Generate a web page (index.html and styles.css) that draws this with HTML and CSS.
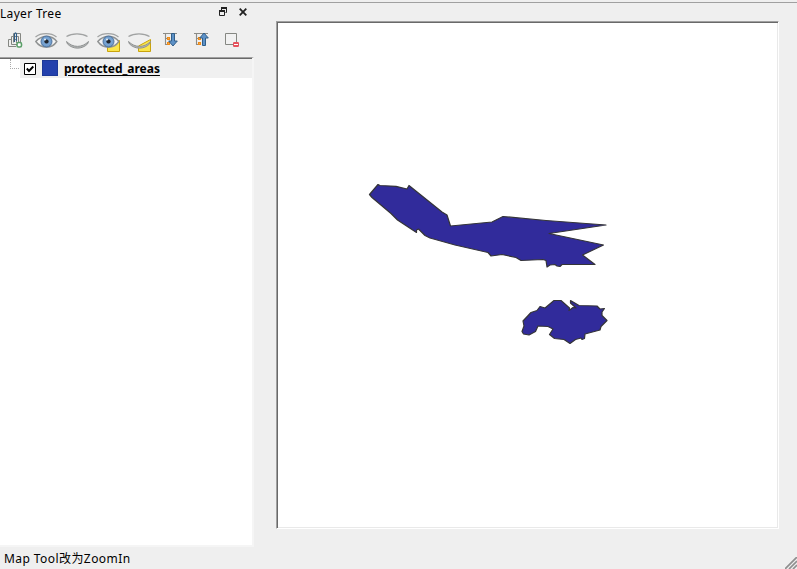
FILE: index.html
```html
<!DOCTYPE html>
<html lang="zh">
<head>
<meta charset="utf-8">
<title>Layer Tree</title>
<link rel="stylesheet" href="styles.css">
</head>
<body>
<svg width="0" height="0" class="defs">
  <defs>
    <radialGradient id="iris"><stop offset="0" stop-color="#5277a5"/><stop offset=".55" stop-color="#7aa5d3"/><stop offset="1" stop-color="#6b98c9"/></radialGradient>
    <g id="eye">
      <path d="M.8 9.500C6 3 17 2.500 21.800 9.500C17 17 6 17 .8 9.500Z" fill="#f4f4f4" stroke="#8f9292" stroke-width="1.400"/>
      <path d="M.5 5C6 .6 16 .6 21.500 5" fill="none" stroke="#a0a2a2" stroke-width="1.300"/>
      <circle cx="11.500" cy="9.500" r="5.500" fill="url(#iris)" stroke="#486b94" stroke-width=".9"/>
      <circle cx="11.500" cy="9.500" r="2.100" fill="#20262e"/>
      <circle cx="10" cy="7.500" r="1" fill="#e8f0f8"/>
    </g>
    <g id="closed">
      <path d="M.5 4.500C6 1 16 1 21.500 4.500" fill="none" stroke="#a0a2a2" stroke-width="1.400"/>
      <path d="M.5 9.500C7 16 16 16 22.500 9.500L21.500 12C16 17.500 7 17.500 1.500 12Z" fill="#b5b7b7" stroke="#8f9292" stroke-width="1"/>
    </g>
    <g id="tree" fill="none" stroke="#8c8c88">
      <path d="M0 1.500H14M2.500 1.500V13M2.500 6.500H4M2.500 12.500H4" stroke-width="1.100"/>
      <path d="M4.600 5.600H6.400V7.400H4.600ZM4.600 10.600H6.400V12.400H4.600Z" fill="#fff" stroke="#f08b16" stroke-width="1.300"/>
    </g>
  </defs>
</svg>
<main class="workspace">
  <section class="dock">
    <header class="title"><h1>Layer Tree</h1>
      <svg class="float" width="9" height="9"><path d="M2.500 3V.5H7.500V5.500H6.500" fill="none" stroke="#222"/><path d="M2 1H8" stroke="#222" stroke-width="2"/><path d="M.5 3.500H5.500V8.500H.5Z" fill="#efefef" stroke="#222"/><path d="M0 4H6" stroke="#222" stroke-width="2"/></svg>
      <svg class="close" width="8" height="8"><path d="M.7.700L7.300 7.300M7.300.700L.7 7.300" stroke="#222" stroke-width="1.800"/></svg>
    </header>
    <nav class="tools">
      <svg class="group" width="16" height="17"><g fill="none" stroke="#858782"><path d="M5.500 10.500V1.500H12.500V10"/><path d="M5 4.500H3.500V12.500H9M10.500 12V4.500H7"/><path d="M3 7.500H.5V14.500H8M8.500 11V7.500H5"/></g><path d="M6.500 10V2Q7.500-.5 8.500 2V9" fill="none" stroke="#315e88" stroke-width="1.100"/><rect x="9" y="10.500" width="4.500" height="4.500" rx="1.500" fill="#fff" stroke="#5a9f68" stroke-width="1.600"/></svg>
      <svg class="eye" width="25" height="20"><use href="#eye"/></svg>
      <svg class="eye" width="25" height="20"><use href="#closed"/></svg>
      <svg class="eye" width="25" height="20"><path d="M10.500 8.500H22.500V19.500H10.500Z" fill="#fbe64c" stroke="#c9a30c"/><use href="#eye"/></svg>
      <svg class="eye" width="25" height="20"><path d="M10.500 19.500V14L22.500 7.500V19.500Z" fill="#fbe64c" stroke="#c9a30c"/><use href="#closed"/></svg>
      <svg class="expand" width="16" height="16"><use href="#tree"/><path d="M8.500 1.500H11.500V9H14.300L10 14L5.700 9H8.500Z" fill="#5d91c7" stroke="#315e88"/></svg>
      <svg class="collapse" width="16" height="16"><use href="#tree"/><path d="M8.500 13.500H11.500V6H14.300L10 1L5.700 6H8.500Z" fill="#5d91c7" stroke="#315e88"/></svg>
      <svg class="remove" width="16" height="16"><path d="M.5 1.500H11.500V12.500H.5Z" fill="#f1f1f1" stroke="#858782"/><rect x="8" y="10" width="6" height="5" rx="1.200" fill="#e6515c"/><path d="M9 12.500H13" stroke="#fff"/></svg>
    </nav>
    <div class="layers">
      <div class="row"><span class="branch"></span>
        <div class="item"><svg class="check" width="12" height="12"><path d="M.5.500H11.500V11.500H.5Z" fill="#fff" stroke="#000"/><path d="M2.800 5.500L5 8L9.300 3.500" fill="none" stroke="#000" stroke-width="1.900"/></svg><span class="swatch"></span><span class="name">protected_areas</span></div>
      </div>
    </div>
  </section>
  <section class="map">
    <svg width="500" height="504" viewBox="278 23 500 504">
      <g fill="#312b9b" stroke="#343438" stroke-width="1.200" stroke-linejoin="round">
        <path d="M369.500 194.500L378 184.500L380 185.500L396 186.300L407 189L409 185.500L442 212L447 215L450.500 226L492 222L503 216.500L546 220.500L606 225L549 233.500L603.500 245L582.500 255L595 264.500L562 264.500L560 266.500L557 266L555 264.500L550 265L547 267L546 260.500L543 259.500L521 260.500L516 257.500L502 254.500L491 256L488 252.500L455 245L430 238L425 235.500L418.500 229L416.500 230L416.500 232.500L397.500 220L391 213.500L372 197.500Z"/>
        <path d="M554 300.500L561 300.500L569.500 308L569 310.500L573 307.500L576 308L570.500 303L570.500 300.500L579 305.500L597 306L600 309L604.500 308.500L602 312L602 315.500L607 320.500L601 326.500L600 330L585 334L584.500 338.500L582 339.500L581 338L575.500 339.500L570 343.500L564 339.500L554.500 338.500L549.500 334.500L553 329L548 326.500L538 326L535.500 331.500L529 335L523.500 334L522 331.500L524 326L523 321L531 312.500L537 310.500L540 306.500L545 308Z"/>
      </g>
    </svg>
  </section>
</main>
<footer class="status"><span>Map Tool改为ZoomIn</span><svg class="grip" width="12" height="12"><path d="M0 12L12 0M4 12L12 4M8 12L12 8" stroke="#8f8f8f" stroke-width="1.700"/></svg></footer>
</body>
</html>
```
FILE: styles.css
```css
* { box-sizing: border-box; }
body {
  margin: 0;
  height: 569px;
  padding-top: 2px;
  display: flex;
  flex-direction: column;
  overflow: hidden;
  background: #efefef;
  color: #000;
  font: 12px/16px "Noto Sans", "Noto Sans CJK SC", sans-serif;
}
svg { display: block; flex: none; }
.defs { position: absolute; }
.workspace {
  flex: none;
  height: 545px;
  display: flex;
  border-top: 1px solid #a0a0a0;
}
.dock { width: 254px; display: flex; flex-direction: column; }
.title { height: 22px; display: flex; padding: 3px 7px 0 0; }
h1 {
  margin: 0;
  flex: 1;
  font-size: 12px;
  font-weight: 400;
  line-height: 16px;
  letter-spacing: .32px;
}
.float { margin: 1px 11px 0 0; }
.close { margin-top: 2px; }
.tools { height: 32px; display: flex; padding: 6px 0 0 8px; }
.group { margin: 1px 11px 0 0; }
.eye { margin: 1px 6px 0 0; }
.expand { margin: 1px 15px 0 4px; }
.collapse { margin: 1px 15px 0 0; }
.remove { margin-top: 1px; }
.layers {
  flex: 1;
  background: #fff;
  border: solid;
  border-width: 1px 2px 2px 0;
  border-color: #a0a0a0 #f5f5f5 #f5f5f5;
  box-shadow: inset 0 1px #696969;
  padding-top: 1px;
}
.row { height: 19px; display: flex; }
.branch {
  width: 9px;
  height: 10px;
  margin: 0 1px 0 10px;
  border-left: 1px dotted #aaa;
  border-bottom: 1px dotted #aaa;
}
.item { flex: 1; display: flex; background: #f0f0f0; }
.check { margin: 4px 6px 0 4px; }
.swatch { width: 16px; height: 16px; margin: 1px 6px 0 0; background: #2340ad; border: 1px solid #1c3898; }
.name {
  font-weight: 700;
  line-height: 19px;
  letter-spacing: -.03px;
  text-decoration: underline;
  text-underline-offset: 2px;
}
.map {
  width: 503px;
  height: 508px;
  margin: 18px 0 0 22px;
  padding: 1px 0 0 1px;
  background: #fff;
  border: 1px solid;
  border-color: #a0a0a0 #fff #fff #a0a0a0;
  box-shadow: inset 1px 1px #696969, inset -1px -1px #e9e9e9;
}
.status { flex: 1; display: flex; justify-content: space-between; padding: 4px 0 0 4px; }
.status span { letter-spacing: .43px; }
.grip { align-self: flex-end; }
```
